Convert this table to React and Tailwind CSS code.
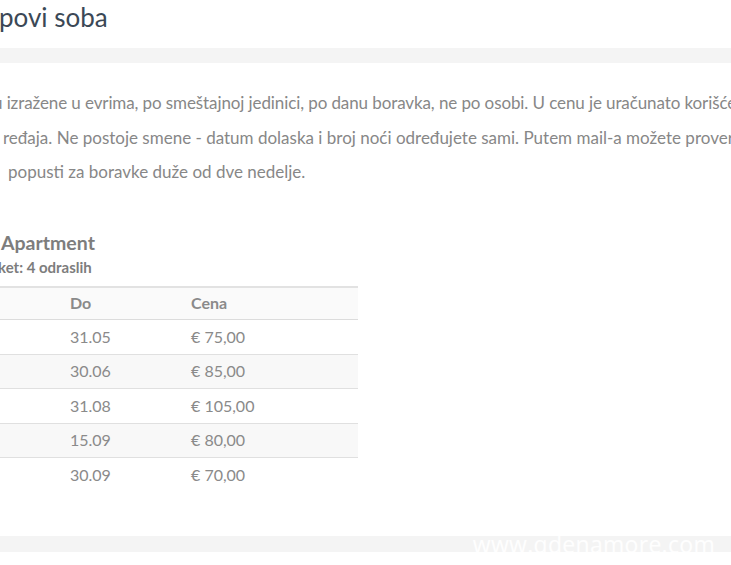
export default function App() {
  const rows = [
    ["31.05", "€ 75,00"],
    ["30.06", "€ 85,00"],
    ["31.08", "€ 105,00"],
    ["15.09", "€ 80,00"],
    ["30.09", "€ 70,00"],
  ];
  return (
    <div className="w-[731px] h-[565px] overflow-hidden bg-white" style={{ fontFamily: "Lato, 'Noto Sans', sans-serif" }}>
      <div className="h-[48px] flex items-center">
        <h1 className="text-[26px] leading-none text-[#3b4856] -ml-[1px] -mt-[14px] whitespace-nowrap">povi soba</h1>
      </div>
      <div className="h-[15px] bg-[#f4f4f4]" />
      <div className="pt-[23px] text-[17px] leading-[34.5px] text-[#878787] whitespace-nowrap">
        <div className="-ml-[7px] tracking-[-0.1px]">u izražene u evrima, po smeštajnoj jedinici, po danu boravka, ne po osobi. U cenu je uračunato korišćenje</div>
        <div className="ml-[3px]">ređaja. Ne postoje smene - datum dolaska i broj noći određujete sami. Putem mail-a možete proveriti</div>
        <div className="ml-[8px]">popusti za boravke duže od dve nedelje.</div>
      </div>
      <div className="pt-[40px]">
        <div className="text-[19.5px] leading-[26px] font-bold text-[#7d7d7d] ml-[1px] whitespace-nowrap">Apartment</div>
        <div className="text-[15px] leading-[22px] font-bold text-[#7d7d7d] -ml-[2px] whitespace-nowrap">ket: 4 odraslih</div>
      </div>
      <table className="mt-[8px] w-[358px] border-collapse text-[16px] text-[#8a8a8a]">
        <thead>
          <tr className="bg-[#fafafa] border-t-2 border-[#e2e2e2] border-b border-b-[#dcdcdc]">
            <th className="h-[33px] w-[70px] p-0"></th>
            <th className="h-[33px] w-[121px] p-0 text-left font-bold">Do</th>
            <th className="h-[33px] p-0 text-left font-bold">Cena</th>
          </tr>
        </thead>
        <tbody>
          {rows.map((r, i) => (
            <tr key={i} className={(i % 2 === 1 ? "bg-[#f8f8f8] " : "bg-white ") + (i < rows.length - 1 ? "border-b border-[#e0e0e0]" : "")}>
              <td className="h-[34.5px] p-0"></td>
              <td className="h-[34.5px] p-0">{r[0]}</td>
              <td className="h-[34.5px] p-0">{r[1]}</td>
            </tr>
          ))}
        </tbody>
      </table>
      <div className="mt-[44px] h-[16px] bg-[#f4f4f4] flex justify-end items-center pr-[16px]">
        <span className="text-[23px] leading-none text-white/90 tracking-[0.3px]" style={{ fontFamily: "'Open Sans', sans-serif" }}>www.qdenamore.com</span>
      </div>
    </div>
  );
}
